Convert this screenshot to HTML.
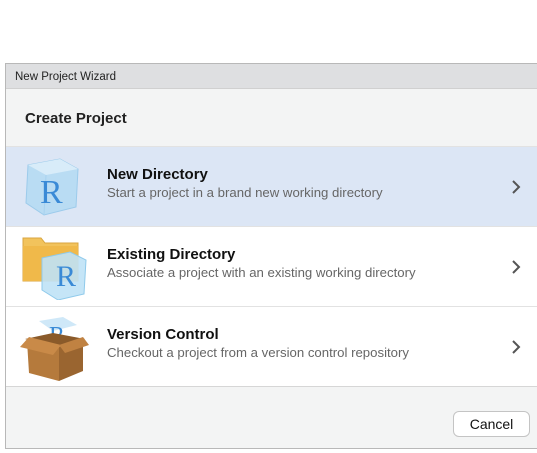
<!DOCTYPE html>
<html><head><style>
*{margin:0;padding:0;box-sizing:border-box}
body{width:537px;height:453px;background:#fff;position:relative;overflow:hidden;font-family:"Liberation Sans",sans-serif}
.dlg{position:absolute;left:5px;top:63px;width:540px;height:386px;border:1px solid #b8b8b8;border-right:none;background:#f3f4f4}
.tb{position:absolute;left:0;top:0;right:0;height:25px;background:#dedfe1;border-bottom:1px solid #d0d0d0;font-size:11.5px;color:#222;padding:7px 0 0 9px}
.hd{position:absolute;left:19px;top:46px;font-size:15px;font-weight:bold;color:#222}
.row{position:absolute;left:0;right:0;height:80px;border-top:1px solid #e2e2e2;background:#fff}
.row.sel{background:#dce6f5}
.t{position:absolute;left:101px;top:19px;font-size:15px;font-weight:bold;color:#111}
.s{position:absolute;left:101px;top:38px;font-size:13.2px;color:#666}
.chev{position:absolute;left:504px;top:32px}
.ic{position:absolute;left:14px;top:10px}
.btn{position:absolute;left:447px;top:347px;width:77px;height:26px;border:1px solid #c4c4c4;border-radius:6px;background:#fff;font-size:14px;text-align:center;line-height:24px;color:#111}
</style></head><body>
<div class="dlg">
<div class="tb">New Project Wizard</div>
<div class="hd">Create Project</div>
<div class="row sel" style="top:82px">
<svg class="ic" width="64" height="62" viewBox="0 0 64 62"><polygon points="8,8 40,2 58,12 56,50 24,58 6,46" fill="#b9dcf3" stroke="#9ccbeb"/><polygon points="8,8 40,2 58,12 26,18" fill="#d8ecf9"/><line x1="26" y1="18" x2="24" y2="58" stroke="#a8d2ef"/><text x="20" y="46" font-family="Liberation Serif,serif" font-size="34" fill="#3a8ad6">R</text></svg>
<div class="t">New Directory</div><div class="s">Start a project in a brand new working directory</div>
<svg class="chev" width="12" height="16"><path d="M3 2l6 6-6 6" stroke="#555" stroke-width="2" fill="none"/></svg></div>
<div class="row" style="top:162px">
<svg class="ic" style="left:14px;top:5px" width="72" height="68" viewBox="0 0 72 68"><path d="M3 6h18l4 5h33v38H3z" fill="#f2c35c" stroke="#d9a640"/><rect x="3" y="14" width="55" height="35" fill="#f0b94a"/><polygon points="22,26 50,20 66,28 64,62 38,68 22,58" fill="#bfe2f6" fill-opacity=".9" stroke="#8fcaeb"/><text x="36" y="54" font-family="Liberation Serif,serif" font-size="30" fill="#3a8ad6">R</text></svg>
<div class="t">Existing Directory</div><div class="s">Associate a project with an existing working directory</div>
<svg class="chev" width="12" height="16"><path d="M3 2l6 6-6 6" stroke="#555" stroke-width="2" fill="none"/></svg></div>
<div class="row" style="top:242px">
<svg class="ic" style="left:13px;top:4px" width="72" height="70" viewBox="0 0 72 70"><polygon points="20,10 44,6 58,14 34,20" fill="#cfe8f8"/><text x="30" y="32" font-family="Liberation Serif,serif" font-size="24" fill="#3a8ad6">R</text><polygon points="6,28 34,22 66,28 40,36" fill="#8a5a2a"/><polygon points="8,30 40,36 40,70 10,62" fill="#b57a3c"/><polygon points="40,36 64,28 64,60 40,70" fill="#9a6530"/><polygon points="1,36 10,26 42,34 34,44" fill="#c98a48"/><polygon points="40,34 64,26 70,34 46,42" fill="#c08242"/></svg>
<div class="t">Version Control</div><div class="s">Checkout a project from a version control repository</div>
<svg class="chev" width="12" height="16"><path d="M3 2l6 6-6 6" stroke="#555" stroke-width="2" fill="none"/></svg></div>
<div style="position:absolute;left:0;right:0;top:322px;border-top:1px solid #d6d6d6"></div>
<div class="btn">Cancel</div>
</div>
</body></html>
